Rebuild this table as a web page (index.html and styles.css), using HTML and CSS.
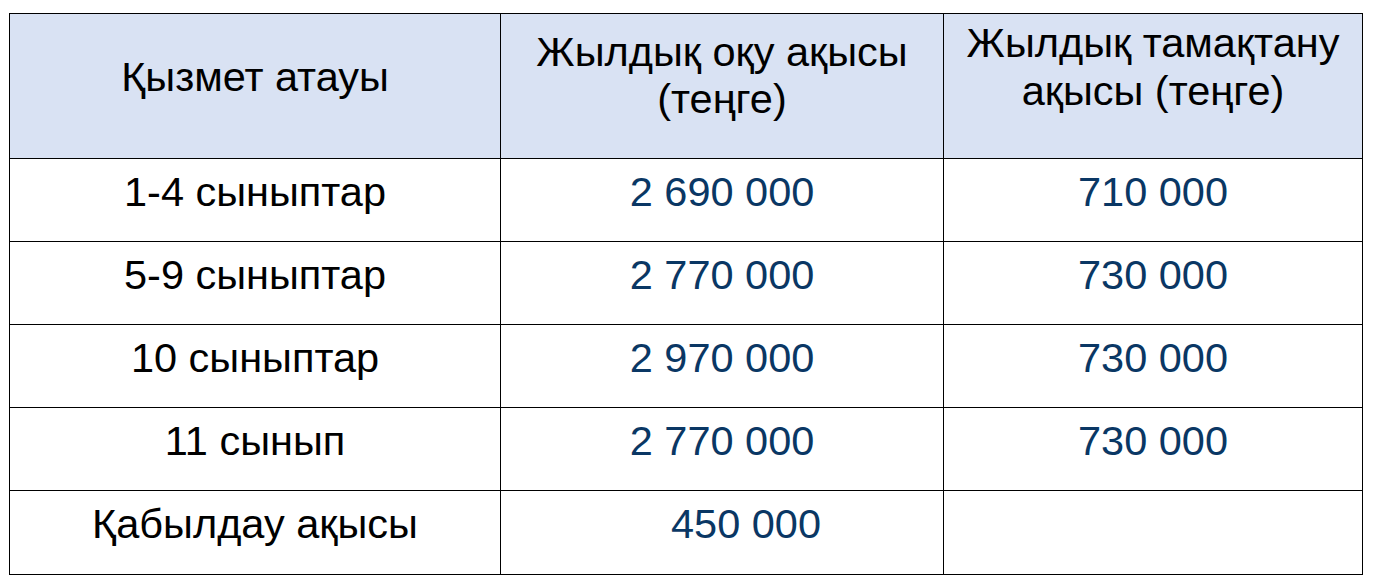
FILE: index.html
```html
<!DOCTYPE html>
<html lang="kk">
<head>
<meta charset="utf-8">
<title>Оқу ақысы</title>
<link rel="stylesheet" href="styles.css">
</head>
<body>
<div class="fee-table">
  <div class="cell head head-1">Қызмет атауы</div>
  <div class="cell head head-2">Жылдық оқу ақысы<br>(теңге)</div>
  <div class="cell head head-3">Жылдық тамақтану<br>ақысы (теңге)</div>

  <div class="cell label">1-4 сыныптар</div>
  <div class="cell num">2 690 000</div>
  <div class="cell num">710 000</div>

  <div class="cell label">5-9 сыныптар</div>
  <div class="cell num">2 770 000</div>
  <div class="cell num">730 000</div>

  <div class="cell label">10 сыныптар</div>
  <div class="cell num">2 970 000</div>
  <div class="cell num">730 000</div>

  <div class="cell label">11 сынып</div>
  <div class="cell num">2 770 000</div>
  <div class="cell num">730 000</div>

  <div class="cell label">Қабылдау ақысы</div>
  <div class="cell num num-shift">450 000</div>
  <div class="cell num"></div>
</div>
</body>
</html>
```

FILE: styles.css
```css
html, body {
  background: #ffffff;
}

body {
  margin: 13px 0 0 9px;
  font-family: "Liberation Sans", Arial, sans-serif;
  font-size: 41.5px;
  color: #000000;
}

.fee-table {
  display: grid;
  grid-template-columns: 491px 443px 419px;
  grid-template-rows: 145px 83px 83px 83px 83px 84px;
  width: 1354px;
  box-sizing: border-box;
  border-left: 1px solid #000;
  border-top: 1px solid #000;
}

.cell {
  box-sizing: border-box;
  border-right: 1px solid #000;
  border-bottom: 1px solid #000;
  text-align: center;
  line-height: 50px;
  padding-top: 8px;
  white-space: nowrap;
}

.head {
  background: #d9e2f3;
}

.head-1 {
  padding-top: 38px;
  line-height: 50px;
}

.head-2 {
  padding-top: 15px;
  line-height: 46.5px;
}

.head-3 {
  padding-top: 5px;
  line-height: 48px;
}

.num {
  color: #0a3764;
}

.num-shift {
  padding-left: 48px;
}
```
